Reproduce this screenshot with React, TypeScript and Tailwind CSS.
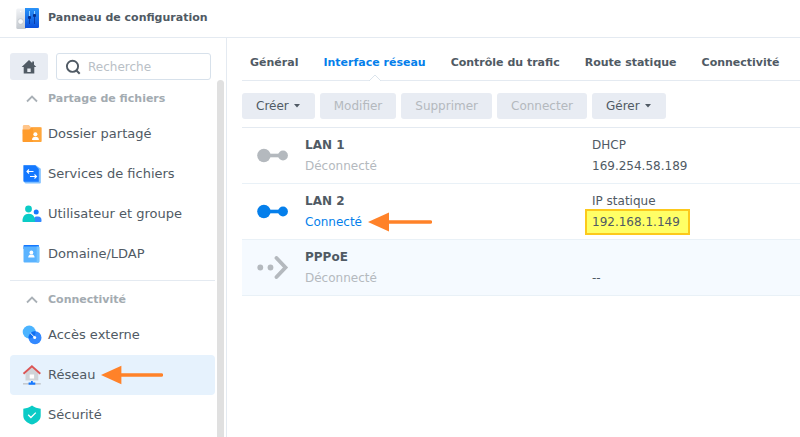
import type { ReactNode } from "react";

interface NavItem {
  label: string;
  icon: ReactNode;
  active?: boolean;
}

interface NetworkInterface {
  name: string;
  status: string;
  connected?: boolean;
  selected?: boolean;
  mode: string;
  address: string;
  icon: ReactNode;
}

function ControlPanelIcon() {
  return (
    <svg className="h-6 w-6" viewBox="0 0 24 24" aria-hidden="true">
      <defs>
        <linearGradient id="dial" x1="0" y1="0" x2="0" y2="1">
          <stop offset="0" stopColor="#f2f4f7" />
          <stop offset="1" stopColor="#c3c8ce" />
        </linearGradient>
        <linearGradient id="mixer" x1="0" y1="0" x2="0" y2="1">
          <stop offset="0" stopColor="#2a93f8" />
          <stop offset="1" stopColor="#0a50dc" />
        </linearGradient>
      </defs>
      <rect x="0.3" y="1.5" width="10" height="20.5" rx="1.5" fill="url(#dial)" />
      <path d="M9 1h12.700A1.300 1.300 0 0 1 23 2.300v17.400a1.300 1.300 0 0 1-1.300 1.300H9z" fill="url(#mixer)" />
      <circle cx="4.600" cy="14.500" r="2.800" fill="#f9fafb" stroke="#b4bac1" strokeWidth="0.600" />
      <circle cx="4.600" cy="4.500" r="0.800" fill="#fff" />
      <path d="M13.500 4.500v12.500M18.500 4.500v12.500" stroke="#0a3da8" strokeWidth="1" />
      <path d="M13.500 4v5M18.500 4v3" stroke="#8fd0ff" strokeWidth="1" />
      <path d="M12 10.500h3M17 8.500h3" stroke="#06308d" strokeWidth="2.400" />
    </svg>
  );
}

function SharedFolderIcon() {
  return (
    <svg className="size-5" viewBox="0 0 20 20" aria-hidden="true">
      <path d="M0.800 2.500c0-.9.500-1.500 1.400-1.500h4.600l2 2h8.800c.8 0 1.400.5 1.400 1.300V10H.8z" fill="#ffc58a" />
      <path d="M0.500 5.500h6.800l2-2h10.200v13.600c0 .6-.4 1-1 1h-17c-.6 0-1-.4-1-1z" fill="#ff9c2c" />
      <path d="M11 3.500h8.500v13.600c0 .6-.4 1-1 1H11z" fill="#ffb14a" fillOpacity="0.500" />
      <circle cx="13.400" cy="10.300" r="2" fill="#fff" />
      <path d="M10 16c0-2.200 1.300-3.200 3.400-3.200s3.500 1 3.500 3.200z" fill="#fff" />
    </svg>
  );
}

function FileServicesIcon() {
  return (
    <svg className="size-5" viewBox="0 0 20 20" aria-hidden="true">
      <path d="M1.500 1.200h12.300l5 3.600v13.700a1 1 0 0 1-1 1H3.500l-2-2z" fill="#7fbfff" />
      <path d="M1.500 1.200h11.800L16.800 5v12.800H2.500a1 1 0 0 1-1-1z" fill="#1478ff" />
      <path d="M11.500 7.500H5M7 5.500l-2 2 2 2M8 12.500h6.500M12.500 10.500l2 2-2 2" fill="none" stroke="#fff" strokeWidth="1.100" />
    </svg>
  );
}

function UsersIcon() {
  return (
    <svg className="size-5" viewBox="0 0 20 20" aria-hidden="true">
      <circle cx="14.200" cy="8" r="2.500" fill="#1478ff" />
      <path d="M12 18v-3c0-1.400.8-2.400 2.300-2.400h1.700c2.200 0 3.500 1.300 3.500 3.400v1c0 .6-.4 1-1 1z" fill="#3389ff" />
      <circle cx="6.500" cy="5" r="3.400" fill="#0bcbc6" />
      <path d="M0.500 17.200C.5 12.800 2.500 9.800 6.800 9.800s6.200 3 6.200 7.400c0 .5-.4.900-.9.900H1.400c-.5 0-.9-.4-.9-.9z" fill="#0bcbc6" />
    </svg>
  );
}

function DirectoryIcon() {
  return (
    <svg className="size-5" viewBox="0 0 20 20" aria-hidden="true">
      <path d="M2.500 1h13.500c.6 0 1 .4 1 1v3h-15.500V2c0-.6.4-1 1-1z" fill="#1478ff" />
      <rect x="1.500" y="2.400" width="15.800" height="16.200" rx="1" fill="#5ab3ff" />
      <path d="M14.700 2.400h1.600a1 1 0 0 1 1 1v14.200a1 1 0 0 1-1 1h-1.600z" fill="#74c4ff" />
      <circle cx="9.400" cy="8.400" r="1.900" fill="#fff" />
      <path d="M6.200 13.600c0-2.100 1.200-3 3.200-3s3.200.9 3.200 3z" fill="#fff" />
    </svg>
  );
}

function ExternalAccessIcon() {
  return (
    <svg className="size-5" viewBox="0 0 20 20" aria-hidden="true">
      <circle cx="7.200" cy="7" r="6.500" fill="#4cb4ff" />
      <circle cx="13" cy="12.700" r="6.500" fill="#3389ff" />
      <path d="M13.600 6.300A6.500 6.500 0 0 1 6.600 13.400 6.500 6.500 0 0 1 13.600 6.300z" fill="#1070f2" />
      <path d="m8.300 8 4.200 4.200" stroke="#fff" strokeWidth="1" />
      <circle cx="12.700" cy="12.400" r="1.500" fill="#fff" />
    </svg>
  );
}

function NetworkIcon() {
  return (
    <svg className="size-5" viewBox="0 0 20 20" aria-hidden="true">
      <path d="M3.500 8 9.900 2.600 16.300 8v7.500H3.500z" fill="#d0d3d7" />
      <path d="M1.500 8.700 9.900 1.300l8.400 7.400" fill="none" stroke="#db5555" strokeWidth="1.900" />
      <rect x="7.700" y="9.500" width="4.400" height="4" fill="#fff" />
      <path d="M1 18.800h17.800" stroke="#c5cad0" strokeWidth="1.600" />
      <path d="M9 16h1.800v1.500h2.500v2.200H6.600v-2.200H9z" fill="#1478ff" />
    </svg>
  );
}

function SecurityIcon() {
  return (
    <svg className="size-5" viewBox="0 0 20 20" aria-hidden="true">
      <path d="M10 .6c2.600 2 5.300 2.900 8.700 3.100v7c0 4.300-3.600 7-8.700 8.900-5.100-1.900-8.700-4.600-8.700-8.900v-7C4.700 3.500 7.400 2.600 10 .6z" fill="#0bcbc6" />
      <path d="m6.200 9.800 2.700 2.700 4.900-4.900" fill="none" stroke="#fff" strokeWidth="1.300" />
    </svg>
  );
}

function LinkIcon({ className }: { className: string }) {
  return (
    <svg className={`h-6 w-8 ${className}`} viewBox="0 0 32 24" fill="currentColor" aria-hidden="true">
      <circle cx="6.900" cy="11.500" r="6.700" />
      <rect x="10" y="9.700" width="14" height="3.600" />
      <circle cx="26" cy="11.500" r="4.900" />
    </svg>
  );
}

function PppoeIcon() {
  return (
    <svg className="h-6 w-8 text-[#b4b9be]" viewBox="0 0 32 24" aria-hidden="true">
      <circle cx="3.300" cy="11.500" r="2.900" fill="currentColor" />
      <circle cx="13.500" cy="11.500" r="2.900" fill="currentColor" />
      <path d="m19.500 2 9 9.500-9 9.500" fill="none" stroke="currentColor" strokeWidth="3.800" strokeLinecap="round" />
    </svg>
  );
}

function Chevron() {
  return (
    <svg className="h-3 w-3" viewBox="0 0 12 12" aria-hidden="true">
      <path d="m1 8.500 5-5 5 5" fill="none" stroke="#a9b0b6" strokeWidth="1.800" />
    </svg>
  );
}

function Arrow({ className }: { className: string }) {
  return (
    <svg className={className} viewBox="0 0 64 20" aria-hidden="true">
      <path d="M0 10 21 .5v19z" fill="#ff8229" />
      <path d="M20 10h42.500" stroke="#ff8229" strokeWidth="3.400" strokeLinecap="round" />
    </svg>
  );
}

const fileItems: NavItem[] = [
  { label: "Dossier partagé", icon: <SharedFolderIcon /> },
  { label: "Services de fichiers", icon: <FileServicesIcon /> },
  { label: "Utilisateur et groupe", icon: <UsersIcon /> },
  { label: "Domaine/LDAP", icon: <DirectoryIcon /> },
];

const connectivityItems: NavItem[] = [
  { label: "Accès externe", icon: <ExternalAccessIcon /> },
  { label: "Réseau", icon: <NetworkIcon />, active: true },
  { label: "Sécurité", icon: <SecurityIcon /> },
];

const tabs = ["Général", "Interface réseau", "Contrôle du trafic", "Route statique", "Connectivité"];

const actions = [
  { label: "Créer", menu: true, disabled: false },
  { label: "Modifier", menu: false, disabled: true },
  { label: "Supprimer", menu: false, disabled: true },
  { label: "Connecter", menu: false, disabled: true },
  { label: "Gérer", menu: true, disabled: false },
];

const interfaces: NetworkInterface[] = [
  { name: "LAN 1", status: "Déconnecté", mode: "DHCP", address: "169.254.58.189", icon: <LinkIcon className="text-[#b4b9be]" /> },
  { name: "LAN 2", status: "Connecté", connected: true, mode: "IP statique", address: "192.168.1.149", icon: <LinkIcon className="text-[#057feb]" /> },
  { name: "PPPoE", status: "Déconnecté", selected: true, mode: "", address: "--", icon: <PppoeIcon /> },
];

function NavSection({ title, items }: { title: string; items: NavItem[] }) {
  return (
    <section className="pt-1">
      <h2>
        <button className="flex h-[30px] w-full items-center gap-2.5 pl-4 text-[11px] font-bold text-[#a3abb1]">
          <Chevron />
          {title}
        </button>
      </h2>
      <ul>
        {items.map((item) => (
          <li key={item.label}>
            <a
              href="#"
              className={`flex h-10 items-center gap-1.5 rounded pl-3 text-[13px] ${item.active ? "bg-[#e6f2fd]" : ""}`}
            >
              {item.icon}
              {item.label}
              {item.active && <Arrow className="h-5 w-[62px]" />}
            </a>
          </li>
        ))}
      </ul>
    </section>
  );
}

export default function App() {
  return (
    <div className="flex h-screen flex-col overflow-hidden bg-white font-['DejaVu_Sans',sans-serif] text-xs text-[#505a64]">
      <header className="flex h-[38px] shrink-0 items-center gap-2 border-b border-[#e4eaf1] pl-4">
        <ControlPanelIcon />
        <h1 className="text-[11px] font-bold">Panneau de configuration</h1>
      </header>

      <div className="flex min-h-0 flex-1">
        <aside className="flex w-[227px] shrink-0 flex-col border-r border-[#e4eaf1]">
          <div className="flex shrink-0 gap-2 pt-[15px] pr-[15px] pl-2.5">
            <button aria-label="Accueil" className="flex h-[27px] w-[38px] items-center justify-center rounded-[3px] bg-[#e8ecf3]">
              <svg className="h-4 w-4" viewBox="0 0 16 16" aria-hidden="true">
                <path d="M8 1 .7 8h2v6.500h10.600V8h2L13 5.800V2.500h-1.800v1.600z" fill="#505a64" />
                <path d="M6.300 9.500h3.400v3.500H6.300z" fill="#e8ecf3" />
              </svg>
            </button>
            <label className="flex h-[27px] min-w-0 flex-1 items-center gap-[7px] rounded-[3px] border border-[#d7e1eb] px-2">
              <svg className="h-4 w-4 shrink-0" viewBox="0 0 16 16" aria-hidden="true">
                <circle cx="7.500" cy="7.300" r="5.600" fill="none" stroke="#505a64" strokeWidth="1.900" />
                <path d="m11 11 3.700 3.700" stroke="#505a64" strokeWidth="2" />
              </svg>
              <input
                type="search"
                aria-label="Recherche"
                placeholder="Recherche"
                className="w-full min-w-0 text-xs outline-none placeholder:text-[#b9c0c6]"
              />
            </label>
          </div>

          <div className="flex min-h-0 flex-1 justify-between overflow-hidden pr-0.5 pl-2.5">
            <nav className="w-[205px]">
              <NavSection title="Partage de fichiers" items={fileItems} />
              <hr className="mt-1.5 border-[#e4eaf1]" />
              <NavSection title="Connectivité" items={connectivityItems} />
            </nav>
            <div className="w-[7px] rounded-t-full bg-[#e0e0e0]" />
          </div>
        </aside>

        <main className="min-w-0 flex-1 pl-[15px]">
          <nav className="flex h-[43px] gap-[25px] border-b border-[#e4eaf1] pt-4 pl-2 text-[11px] leading-[18px] font-bold whitespace-nowrap">
            {tabs.map((tab) => (
              <a key={tab} href="#" className={tab === "Interface réseau" ? "relative text-[#057feb]" : ""}>
                {tab}
                {tab === "Interface réseau" && (
                  <svg className="absolute -bottom-px left-1/2 h-[7px] w-3 -translate-x-1/2" viewBox="0 0 12 7" aria-hidden="true">
                    <path d="M0 7 6 1l6 6" fill="#fff" stroke="#dbe4ec" />
                  </svg>
                )}
              </a>
            ))}
          </nav>

          <div className="flex gap-[5px] pt-3 pb-2">
            {actions.map((action) => (
              <button
                key={action.label}
                disabled={action.disabled}
                className="flex h-[26px] items-center gap-1 rounded-[3px] bg-[#e8ecf3] px-3.5 disabled:text-[#b4b9be]"
              >
                {action.label}
                {action.menu && (
                  <svg className="h-1 w-2" viewBox="0 0 8 4" aria-hidden="true">
                    <path d="M1 0h6L4 3.500z" fill="#505a64" />
                  </svg>
                )}
              </button>
            ))}
          </div>

          <table className="w-full table-fixed border-t border-[#e4eaf1] text-left">
            <colgroup>
              <col className="w-[63px]" />
              <col className="w-[287px]" />
              <col />
            </colgroup>
            <tbody>
              {interfaces.map((item) => (
                <tr key={item.name} className={`h-14 border-b border-[#e9f1f7] ${item.selected ? "bg-[#f5faff]" : ""}`}>
                  <td className="pl-[15px]">{item.icon}</td>
                  <td className="leading-[21px]">
                    <p className="font-bold">{item.name}</p>
                    <p className={`flex items-center gap-1.5 ${item.connected ? "text-[#057feb]" : "text-[#b4b9be]"}`}>
                      {item.status}
                      {item.connected && <Arrow className="h-5 w-16" />}
                    </p>
                  </td>
                  <td className="leading-[21px]">
                    <p className="h-[21px]">{item.mode}</p>
                    <p>
                      {item.connected ? (
                        <mark className="-ml-[7px] border-2 border-[#fcc91c] bg-[#ffff66] py-1 pr-2 pl-[5px] text-inherit">{item.address}</mark>
                      ) : (
                        item.address
                      )}
                    </p>
                  </td>
                </tr>
              ))}
            </tbody>
          </table>
        </main>
      </div>
    </div>
  );
}
